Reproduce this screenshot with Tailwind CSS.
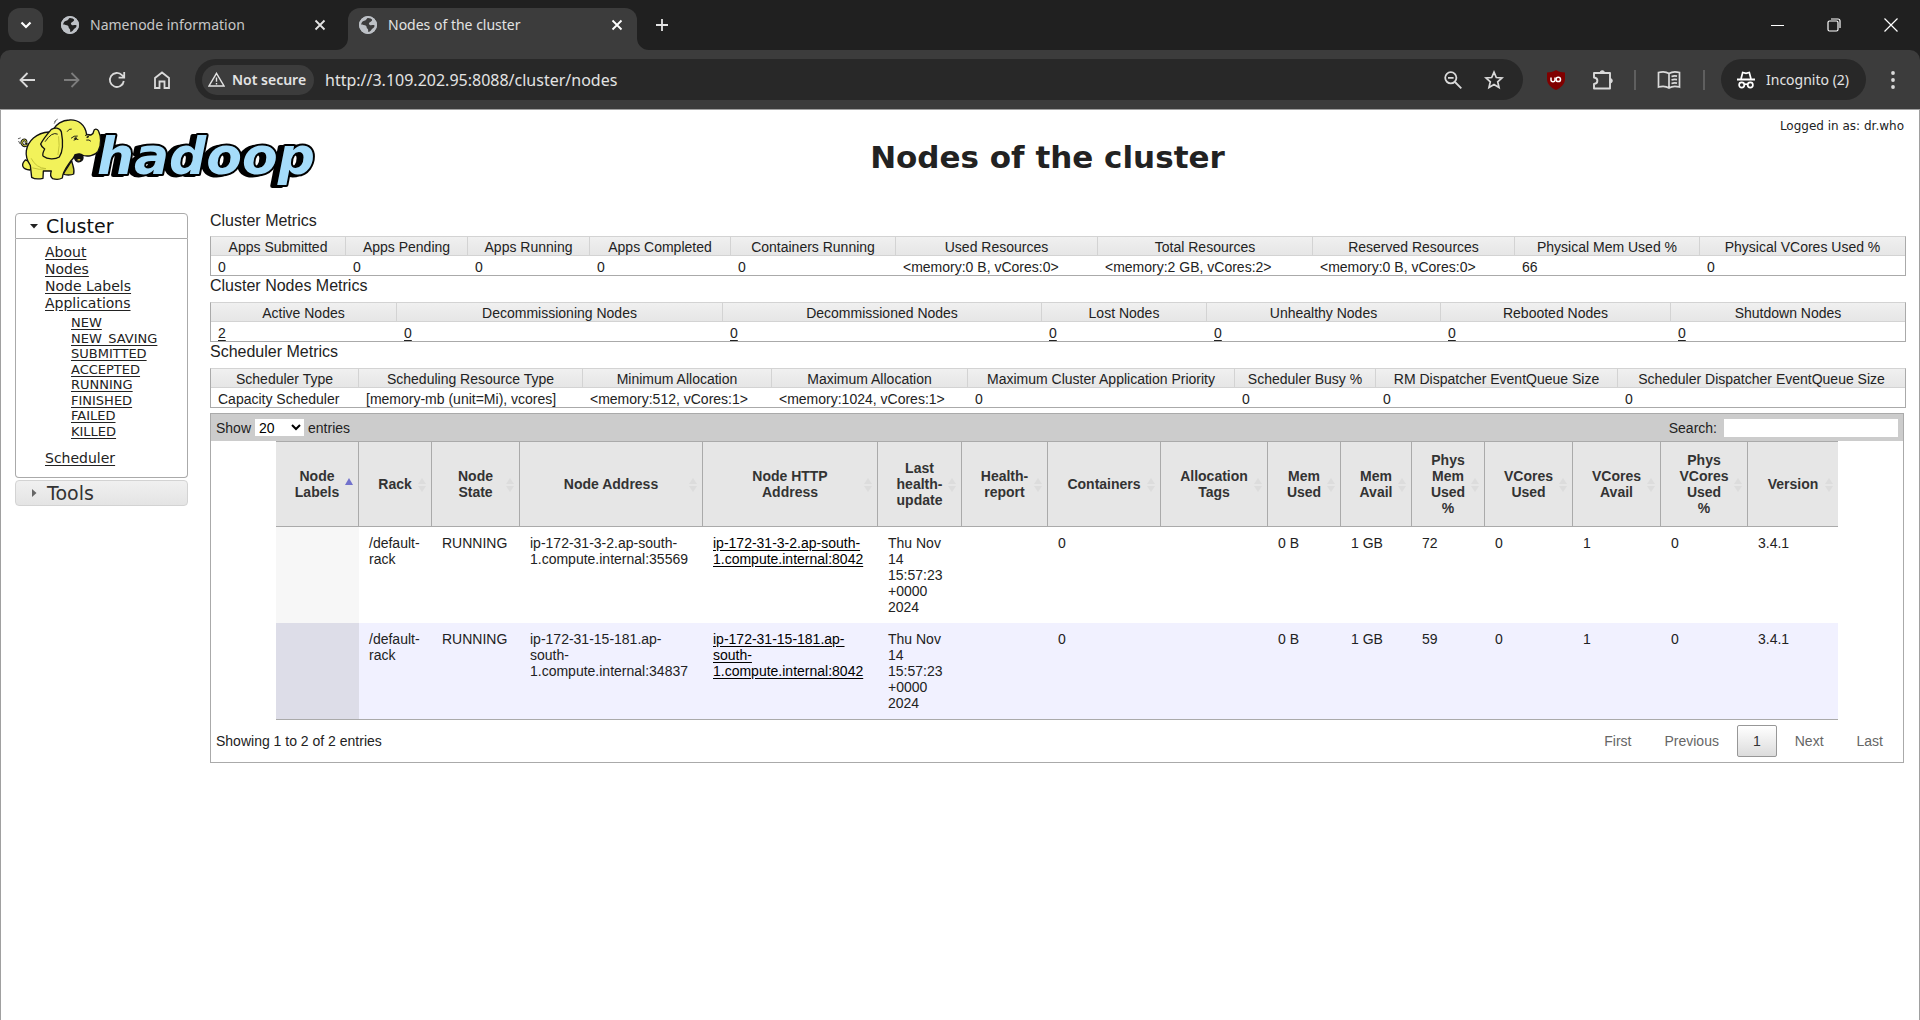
<!DOCTYPE html>
<html lang="en">
<head>
<meta charset="utf-8">
<title>Nodes of the cluster</title>
<script src="https://cdn.jsdelivr.net/npm/@tailwindcss/browser@4"></script>
</head>
<body class="min-h-screen flex flex-col bg-white text-[#222] font-['Liberation_Sans',Arial,sans-serif] text-[14px] leading-4">

<!-- Browser window -->
<div class="bg-[#202020] font-['Noto_Sans','Open_Sans',sans-serif] text-[#e3e3e3]">
  <div class="flex h-[50px] items-end">
    <button aria-label="Search tabs" class="ml-2 mb-2 flex h-[34px] w-[35px] items-center justify-center rounded-xl bg-[#3c3c3c]">
      <svg width="12" height="8" viewBox="0 0 12 8" fill="none" stroke="#fff" stroke-width="2.2"><path d="M1.5 1.5 6 6l4.500-4.500"/></svg>
    </button>
    <div class="flex h-[42px] w-[305px] items-center pl-[18px] pb-2 text-[#c7c7c7]">
      <svg width="18" height="18" viewBox="0 0 18 18"><circle cx="9" cy="9" r="9" fill="#bdc1c6"/><path d="M10 1.500c-3 .2-2 2.500-4 3S2 6 1.800 8.500c1.500.8 4.200.2 5.200 1.300s.2 2 1.500 3 .2 2.500 1 3.400c1.800-.2 2.300-2.300 3.500-3.300s3-1.400 2.600-3.400c-1.400-1-3.600.3-4.800-.6S9.600 7 10.800 6.200 13.500 5 13 3.500 11.500 1.800 10 1.500z" fill="#202020"/><circle cx="9" cy="9" r="8" fill="none" stroke="#bdc1c6" stroke-width="2"/></svg>
      <span class="ml-[11px] flex-1 text-[14px]">Namenode information</span>
      <button aria-label="Close tab" class="mr-[22px]"><svg width="12" height="12" viewBox="0 0 12 12" stroke="#e3e3e3" stroke-width="1.800"><path d="M1.500 1.500l9 9M10.500 1.500l-9 9"/></svg></button>
    </div>
    <div class="relative flex h-[42px] w-[289px] items-center rounded-t-xl bg-[#3c3c3c] pl-[11px] pb-2">
      <svg class="absolute bottom-0 -left-3" width="12" height="12"><path d="M12 0v12H0A12 12 0 0 0 12 0z" fill="#3c3c3c"/></svg>
      <svg class="absolute bottom-0 -right-3" width="12" height="12"><path d="M0 0v12h12A12 12 0 0 1 0 0z" fill="#3c3c3c"/></svg>
      <svg width="18" height="18" viewBox="0 0 18 18"><circle cx="9" cy="9" r="9" fill="#bdc1c6"/><path d="M10 1.500c-3 .2-2 2.500-4 3S2 6 1.800 8.500c1.500.8 4.200.2 5.200 1.300s.2 2 1.500 3 .2 2.500 1 3.400c1.800-.2 2.300-2.300 3.500-3.300s3-1.400 2.600-3.400c-1.400-1-3.600.3-4.800-.6S9.600 7 10.800 6.200 13.500 5 13 3.500 11.500 1.800 10 1.500z" fill="#3c3c3c"/><circle cx="9" cy="9" r="8" fill="none" stroke="#bdc1c6" stroke-width="2"/></svg>
      <span class="ml-[11px] flex-1 text-[14px]">Nodes of the cluster</span>
      <button aria-label="Close tab" class="mr-[14px]"><svg width="12" height="12" viewBox="0 0 12 12" stroke="#fff" stroke-width="1.800"><path d="M1.500 1.500l9 9M10.500 1.500l-9 9"/></svg></button>
    </div>
    <button aria-label="New tab" class="mb-[18px] ml-[18px]"><svg width="14" height="14" viewBox="0 0 14 14" stroke="#e3e3e3" stroke-width="1.800"><path d="M7 1v12M1 7h12"/></svg></button>
    <div class="mb-[18px] ml-auto mr-[22px] flex items-center gap-[43px]">
      <button aria-label="Minimize"><svg width="14" height="14" viewBox="0 0 14 14" stroke="#fff"><path d="M1 7.500h13"/></svg></button>
      <button aria-label="Restore"><svg width="14" height="14" viewBox="0 0 14 14" fill="none" stroke="#fff" stroke-width="1.200"><rect x="1" y="3" width="10" height="10" rx="1.500"/><path d="M4 1h7a2 2 0 0 1 2 2v7"/></svg></button>
      <button aria-label="Close"><svg width="14" height="14" viewBox="0 0 14 14" stroke="#fff" stroke-width="1.200"><path d="M.5.500l13 13M13.500.500l-13 13"/></svg></button>
    </div>
  </div>
  <div class="flex h-[59px] items-center rounded-t-[10px] bg-[#3c3c3c] pl-[18px]">
    <nav class="flex gap-[27px]">
      <button aria-label="Back"><svg width="18" height="18" viewBox="0 0 18 18" fill="none" stroke="#dadada" stroke-width="1.800"><path d="M17 9H2.500M9.500 2 2.500 9l7 7"/></svg></button>
      <button aria-label="Forward"><svg width="18" height="18" viewBox="0 0 18 18" fill="none" stroke="#7d7d7d" stroke-width="1.800"><path d="M1 9h14.500M8.500 2l7 7-7 7"/></svg></button>
      <button aria-label="Reload"><svg width="18" height="18" viewBox="0 0 18 18" fill="none" stroke="#dadada" stroke-width="1.800"><path d="M15.800 10A7 7 0 1 1 14 4.200l2 2M16.200 1v5.600h-5.600"/></svg></button>
      <button aria-label="Home"><svg width="18" height="18" viewBox="0 0 18 18" fill="none" stroke="#dadada" stroke-width="1.800"><path d="M2 17V7l7-5.500L16 7v10h-4.500v-6.500h-5V17z"/></svg></button>
    </nav>
    <div class="ml-[24px] flex h-[41px] flex-1 items-center rounded-full bg-[#282828] pl-[7px]">
      <div class="flex h-[30px] w-[112px] items-center gap-[7px] rounded-full bg-[#3c3c3c] pl-[6px] text-[14px] font-semibold">
        <svg width="17" height="15" viewBox="0 0 17 15" fill="none" stroke="#e3e3e3" stroke-width="1.400"><path d="M8.500 1.300 16 14H1zM8.500 5.500v4.200M8.500 11v1.500"/></svg>
        <span class="whitespace-nowrap">Not secure</span>
      </div>
      <input aria-label="Address" value="http://3.109.202.95:8088/cluster/nodes" class="ml-[11px] min-w-0 flex-1 bg-transparent text-[16px] outline-none">
      <button aria-label="Zoom" class="mr-[22px]"><svg width="18" height="18" viewBox="0 0 18 18" fill="none" stroke="#dadada" stroke-width="1.800"><circle cx="6.800" cy="6.800" r="5.600"/><path d="M11 11l6.300 6.300M4 6.800h5.600"/></svg></button>
      <button aria-label="Bookmark" class="mr-[19px]"><svg width="20" height="20" viewBox="0 0 20 20" fill="none" stroke="#dadada" stroke-width="1.700"><path d="M10 2.200l2.300 5.300 5.700.5-4.300 3.800 1.300 5.600-5-3-5 3 1.300-5.600L2 8l5.700-.5z"/></svg></button>
    </div>
    <div class="flex items-center">
      <button aria-label="uBlock Origin" class="ml-[24px]"><svg width="18" height="20" viewBox="0 0 18 20"><path d="M9 0c3 1.800 6 2.400 9 2.600V9c0 5.500-4.500 9-9 11-4.500-2-9-5.500-9-11V2.600C3 2.400 6 1.800 9 0z" fill="#800000"/><path d="M4 7.500v2.200c0 2.600 4 2.600 4 0V7.500" fill="none" stroke="#fff" stroke-width="1.500"/><circle cx="11.300" cy="9.400" r="2.200" fill="none" stroke="#fff" stroke-width="1.500"/></svg></button>
      <button aria-label="Extensions" class="ml-[27px]"><svg width="22" height="22" viewBox="0 0 22 22" fill="none" stroke="#dadada" stroke-width="1.900"><path d="M2 4h16v15.500H2v-4.500c4.500-.500 4.500-6 0-6.500z" stroke-linejoin="round"/><path d="M8 4a2.300 2.300 0 0 1 4.600 0zM18 9.500a2.300 2.300 0 0 1 0 4.600z" fill="#dadada" stroke-width="1"/></svg></button>
      <span class="ml-[20px] h-5 w-[2px] bg-[#5f5f5f]"></span>
      <button aria-label="Reading mode" class="ml-[21px]"><svg width="24" height="20" viewBox="0 0 24 20" fill="none" stroke="#dadada" stroke-width="1.700"><path d="M12 3.500C9 1.500 5 1.500 1.500 2.500v14.500c3.500-1 7.500-1 10.500 1 3-2 7-2 10.500-1V2.500C19 1.500 15 1.500 12 3.500zV18M14.500 6.500c1.700-.6 3.700-.7 5.500-.3M14.500 10c1.700-.6 3.700-.7 5.500-.3M14.500 13.500c1.700-.6 3.700-.7 5.500-.3"/></svg></button>
      <span class="ml-[22px] h-5 w-[2px] bg-[#5f5f5f]"></span>
      <button class="ml-[16px] flex h-[41px] w-[145px] items-center gap-[11px] rounded-full bg-[#282828] pl-4 text-[14px]">
        <svg width="18" height="18" viewBox="0 0 18 18" fill="none" stroke="#fff" stroke-width="1.700"><path d="M0 8.500h18" stroke-width="2"/><path d="M4 8 5.700 1.500l3.300.8 3.300-.8L14 8"/><circle cx="4.700" cy="14" r="2.600"/><circle cx="13.300" cy="14" r="2.600"/><path d="M7.300 13.600q1.700-1 3.400 0"/></svg>
        <span class="whitespace-nowrap">Incognito (2)</span>
      </button>
      <button aria-label="Menu" class="ml-[25px] mr-[25px]"><svg width="4" height="18" viewBox="0 0 4 18" fill="#dadada"><circle cx="2" cy="2" r="1.900"/><circle cx="2" cy="9" r="1.900"/><circle cx="2" cy="16" r="1.900"/></svg></button>
    </div>
  </div>
</div>

<!-- Page -->
<div class="flex-1 border-x border-t border-[#a0a0a0]">
  <header class="flex h-[96px] items-start pl-[14px] pr-[15px]">
    <a href="#" aria-label="Hadoop home" class="w-[300px] shrink-0">
      <svg width="305" height="85" viewBox="5 0 305 85">
        <text x="87" y="64" font-size="52" stroke="#000" stroke-width="4" stroke-linejoin="round" paint-order="stroke" fill="#a5dcfa" class="font-['DejaVu_Sans',sans-serif] font-bold italic drop-shadow-[-5px_1px_0_#000]">hadoop</text>
        <g transform="scale(.3333)" stroke="#111" stroke-width="4" stroke-linejoin="round" stroke-linecap="round" fill="#f2f25a">
          <path d="M54 104C38 114 30 98 40 90q10-2 8 8" fill="none" stroke-width="8"/>
          <path d="M54 104C38 114 30 98 40 90q10-2 8 8" fill="none" stroke="#e6e64a" stroke-width="3"/>
          <path d="M46 150c-14 14-10 28 14 30l12-20z"/>
          <path d="M160 192c6 4 24 4 31 0 4-14-3-24-6-40z" fill="#d2d236"/>
          <path d="M118 66C78 68 54 94 49 122C46 142 54 156 61 166L65 202C74 208 90 207 99 205L100 183H124C120 193 122 201 128 206C138 209 150 208 157 204C158 184 170 172 183 152C190 146 193 140 196 134C202 134 210 132 216 135C232 142 256 136 264 124C276 104 272 76 266 64C262 54 252 56 251 64C250 76 240 76 230 74C226 44 204 28 178 30C156 30 138 44 130 58Z"/>
          <path d="M196 134C204 131 214 131 218 136C222 150 212 158 202 155C194 152 192 142 196 134Z" fill="#111"/>
          <path d="M201 150q6-5 11-1-4 5-11 1z" fill="#e8d03c" stroke="none"/>
          <path d="M124 58c-12 14-26 32-32 44 2 8 8 12 12 15-4 8-8 18-4 22 12 10 36 10 48 2 12-18 10-54 6-76-6-14-20-12-30-7z"/>
          <path d="M64 146q14 28 44 30-20 5-40-2M146 80q4 26-2 54" fill="none" stroke-width="3" stroke="#c4c438"/>
          <path d="M184 84q8-8 18-6M192 90q8-4 12-2M226 76q8-6 14-2M230 90q8-2 12 3M106 94q20-30 36-22M172 64q5-9 12-7" fill="none" stroke-width="2.800"/>
          <path d="M194 84q5-3 7 1l-6 2zM231 80q4-3 6 0l-5 3z" fill="#111" stroke-width="2"/>
          <path d="M26 94l4 7M25 86l6-2M134 34l8-6M133 40l3-5" fill="none" stroke-width="2"/>
        </g>
      </svg>
    </a>
    <h1 class="mt-[29px] flex-1 text-center font-['DejaVu_Sans',Verdana,sans-serif] text-[31px] leading-9 font-bold">Nodes of the cluster</h1>
    <div class="mt-2 whitespace-nowrap font-['DejaVu_Sans',Verdana,sans-serif] text-[12px]">Logged in as: dr.who</div>
  </header>

  <div class="flex items-start gap-[22px] pl-[14px] pr-[15px]">
    <aside class="mt-[7px] w-[173px] shrink-0 font-['DejaVu_Sans',Verdana,sans-serif]">
      <h3 class="flex h-[26px] items-center gap-[8px] rounded-t-[4px] border border-[#aaa] pl-[14px] text-[19px] text-[#111]">
        <svg width="8" height="5" viewBox="0 0 8 5"><path d="M0 0h8L4 4.500z" fill="#222"/></svg>Cluster
      </h3>
      <div class="h-[239px] rounded-b-[4px] border border-t-0 border-[#aaa] pl-[29px] text-[14px] leading-[17px] underline underline-offset-2">
        <ul class="pt-[5px]">
          <li><a href="#">About</a></li>
          <li><a href="#">Nodes</a></li>
          <li><a href="#">Node Labels</a></li>
          <li><a href="#">Applications</a>
            <ul class="mt-[3px] mb-[11px] flex h-[124px] flex-col justify-between pl-[26px] text-[13px] leading-[15px]">
              <li><a href="#">NEW</a></li>
              <li><a href="#">NEW_SAVING</a></li>
              <li><a href="#">SUBMITTED</a></li>
              <li><a href="#">ACCEPTED</a></li>
              <li><a href="#">RUNNING</a></li>
              <li><a href="#">FINISHED</a></li>
              <li><a href="#">FAILED</a></li>
              <li><a href="#">KILLED</a></li>
            </ul>
          </li>
          <li><a href="#">Scheduler</a></li>
        </ul>
      </div>
      <h3 class="mt-[2px] flex h-[26px] items-center gap-[10px] rounded-[4px] border border-[#d3d3d3] bg-linear-to-b from-[#f0f0f0] to-[#e4e4e4] pl-[16px] text-[19px] text-[#333]">
        <svg width="5" height="8" viewBox="0 0 5 8"><path d="M0 0v8l4.500-4z" fill="#666"/></svg>Tools
      </h3>
    </aside>

    <main class="min-w-0 flex-1">
      <h2 class="flex h-[30px] items-center text-[16px]">Cluster Metrics</h2>
      <table class="w-full table-fixed border-separate border-spacing-0 border border-[#aaa] border-t-[#d3d3d3] whitespace-nowrap [&_th]:h-[19px] [&_th]:border-b [&_th]:border-r [&_th]:border-[#d3d3d3] [&_th]:bg-linear-to-b [&_th]:from-[#f0f0f0] [&_th]:to-[#e6e6e6] [&_th]:pt-[2px] [&_th]:font-normal [&_th:last-child]:border-r-0 [&_td]:h-[19px] [&_td]:pl-[7px] [&_td]:pt-[2px]">
        <colgroup><col class="w-[135px]"><col class="w-[122px]"><col class="w-[122px]"><col class="w-[141px]"><col class="w-[165px]"><col class="w-[202px]"><col class="w-[215px]"><col class="w-[202px]"><col class="w-[185px]"><col class="w-[205px]"></colgroup>
        <thead><tr><th>Apps Submitted</th><th>Apps Pending</th><th>Apps Running</th><th>Apps Completed</th><th>Containers Running</th><th>Used Resources</th><th>Total Resources</th><th>Reserved Resources</th><th>Physical Mem Used %</th><th>Physical VCores Used %</th></tr></thead>
        <tbody><tr><td>0</td><td>0</td><td>0</td><td>0</td><td>0</td><td>&lt;memory:0 B, vCores:0&gt;</td><td>&lt;memory:2 GB, vCores:2&gt;</td><td>&lt;memory:0 B, vCores:0&gt;</td><td>66</td><td>0</td></tr></tbody>
      </table>
      <h2 class="flex h-[26px] items-start text-[16px] leading-5">Cluster Nodes Metrics</h2>
      <table class="w-full table-fixed border-separate border-spacing-0 border border-[#aaa] border-t-[#d3d3d3] whitespace-nowrap [&_th]:h-[19px] [&_th]:border-b [&_th]:border-r [&_th]:border-[#d3d3d3] [&_th]:bg-linear-to-b [&_th]:from-[#f0f0f0] [&_th]:to-[#e6e6e6] [&_th]:pt-[2px] [&_th]:font-normal [&_th:last-child]:border-r-0 [&_td]:h-[19px] [&_td]:pl-[7px] [&_td]:pt-[2px]">
        <colgroup><col class="w-[186px]"><col class="w-[326px]"><col class="w-[319px]"><col class="w-[165px]"><col class="w-[234px]"><col class="w-[230px]"><col class="w-[234px]"></colgroup>
        <thead><tr><th>Active Nodes</th><th>Decommissioning Nodes</th><th>Decommissioned Nodes</th><th>Lost Nodes</th><th>Unhealthy Nodes</th><th>Rebooted Nodes</th><th>Shutdown Nodes</th></tr></thead>
        <tbody class="underline underline-offset-2"><tr><td><a href="#">2</a></td><td><a href="#">0</a></td><td><a href="#">0</a></td><td><a href="#">0</a></td><td><a href="#">0</a></td><td><a href="#">0</a></td><td><a href="#">0</a></td></tr></tbody>
      </table>
      <h2 class="flex h-[26px] items-start text-[16px] leading-5">Scheduler Metrics</h2>
      <table class="w-full table-fixed border-separate border-spacing-0 border border-[#aaa] border-t-[#d3d3d3] whitespace-nowrap [&_th]:h-[19px] [&_th]:border-b [&_th]:border-r [&_th]:border-[#d3d3d3] [&_th]:bg-linear-to-b [&_th]:from-[#f0f0f0] [&_th]:to-[#e6e6e6] [&_th]:pt-[2px] [&_th]:font-normal [&_th:last-child]:border-r-0 [&_td]:h-[19px] [&_td]:pl-[7px] [&_td]:pt-[2px]">
        <colgroup><col class="w-[148px]"><col class="w-[224px]"><col class="w-[189px]"><col class="w-[196px]"><col class="w-[267px]"><col class="w-[141px]"><col class="w-[242px]"><col class="w-[287px]"></colgroup>
        <thead><tr><th>Scheduler Type</th><th>Scheduling Resource Type</th><th>Minimum Allocation</th><th>Maximum Allocation</th><th>Maximum Cluster Application Priority</th><th>Scheduler Busy %</th><th>RM Dispatcher EventQueue Size</th><th>Scheduler Dispatcher EventQueue Size</th></tr></thead>
        <tbody><tr><td>Capacity Scheduler</td><td>[memory-mb (unit=Mi), vcores]</td><td>&lt;memory:512, vCores:1&gt;</td><td>&lt;memory:1024, vCores:1&gt;</td><td>0</td><td>0</td><td>0</td><td>0</td></tr></tbody>
      </table>

      <section class="mt-[5px] border border-[#aaa]">
        <div class="flex h-[27px] items-center justify-between bg-[#ccc] px-[5px]">
          <label class="flex items-center gap-[4px]">Show
            <select class="h-[17px] w-[49px] bg-white text-[14px] text-black"><option>20</option><option>50</option><option>100</option></select>
            entries</label>
          <label class="flex items-center gap-[7px]">Search:
            <input type="search" class="h-[18px] w-[174px] bg-white"></label>
        </div>
        <div class="px-[65px]">
          <table id="nodes" class="w-full table-fixed border-separate border-spacing-0 border-b border-[#aaa] [&_th]:relative [&_th]:h-[86px] [&_th]:border-y [&_th]:border-r [&_th]:border-[#aaa] [&_th]:bg-[#e6e6e6] [&_th]:text-center [&_th]:text-[#333] [&_th:last-child]:border-r-0 [&_td]:px-[10px] [&_td]:py-2 [&_td]:align-top [&_th_svg]:absolute [&_th_svg]:top-1/2 [&_th_svg]:right-[5px] [&_th_svg]:-mt-[6px]">
            <colgroup><col class="w-[83px]"><col class="w-[73px]"><col class="w-[88px]"><col class="w-[183px]"><col class="w-[175px]"><col class="w-[84px]"><col class="w-[86px]"><col class="w-[113px]"><col class="w-[107px]"><col class="w-[73px]"><col class="w-[71px]"><col class="w-[73px]"><col class="w-[88px]"><col class="w-[88px]"><col class="w-[87px]"><col class="w-[90px]"></colgroup>
            <thead><tr>
              <th>Node<br>Labels<svg width="8" height="7" viewBox="0 0 8 7"><path d="M4 0l4 7H0z" fill="#7272cc"/></svg></th>
              <th>Rack</th>
              <th>Node<br>State</th>
              <th>Node Address</th>
              <th>Node HTTP<br>Address</th>
              <th>Last<br>health-<br>update</th>
              <th>Health-<br>report</th>
              <th>Containers</th>
              <th>Allocation<br>Tags</th>
              <th>Mem<br>Used</th>
              <th>Mem<br>Avail</th>
              <th>Phys<br>Mem<br>Used<br>%</th>
              <th>VCores<br>Used</th>
              <th>VCores<br>Avail</th>
              <th>Phys<br>VCores<br>Used<br>%</th>
              <th>Version</th>
            </tr></thead>
            <tbody>
              <tr class="[&>td:first-child]:bg-[#f7f7f7]"><td></td><td>/default-rack</td><td>RUNNING</td><td>ip-172-31-3-2.ap-south-<wbr>1.compute.internal:35569</td><td><a href="#" class="underline underline-offset-2 text-black">ip-172-31-3-2.ap-south-<wbr>1.compute.internal:8042</a></td><td>Thu Nov 14 15:57:23 +0000 2024</td><td></td><td>0</td><td></td><td>0 B</td><td>1 GB</td><td>72</td><td>0</td><td>1</td><td>0</td><td>3.4.1</td></tr>
              <tr class="bg-[#f1f1ff] [&>td:first-child]:bg-[#dddde8]"><td></td><td>/default-rack</td><td>RUNNING</td><td>ip-172-31-15-181.ap-south-<wbr>1.compute.internal:34837</td><td><a href="#" class="underline underline-offset-2 text-black">ip-172-31-15-181.ap-south-<wbr>1.compute.internal:8042</a></td><td>Thu Nov 14 15:57:23 +0000 2024</td><td></td><td>0</td><td></td><td>0 B</td><td>1 GB</td><td>59</td><td>0</td><td>1</td><td>0</td><td>3.4.1</td></tr>
            </tbody>
          </table>
        </div>
        <div class="flex h-[42px] items-center justify-between px-[5px]">
          <span>Showing 1 to 2 of 2 entries</span>
          <div class="flex items-center gap-[3px] text-[#666]">
            <button class="h-8 px-[15px]">First</button>
            <button class="h-8 px-[15px]">Previous</button>
            <button class="h-8 rounded-[2px] border border-[#979797] bg-linear-to-b from-white to-[#dcdcdc] px-[15px] text-[#333]">1</button>
            <button class="h-8 px-[15px]">Next</button>
            <button class="h-8 px-[15px]">Last</button>
          </div>
        </div>
      </section>
    </main>
  </div>
</div>

<script>
  // Unsorted columns carry a faint two-way sort arrow.
  document.querySelectorAll('#nodes th:not(:first-child)').forEach(function (th) {
    th.insertAdjacentHTML('beforeend', '<svg width="8" height="14" viewBox="0 0 8 14"><path d="M4 0l4 6H0zM4 14l4-6H0z" fill="#dcdcdc"/></svg>');
  });
</script>
</body>
</html>
